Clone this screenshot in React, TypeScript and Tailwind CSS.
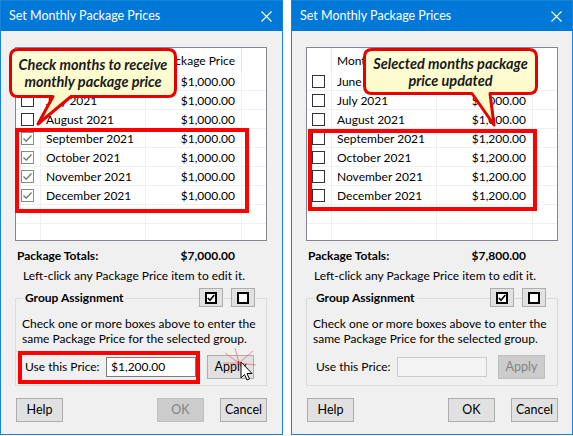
import React from "react";

type Row = { month: string; price: string; checked: boolean };

const leftRows: Row[] = [
  { month: "June 2021", price: "$1,000.00", checked: false },
  { month: "July 2021", price: "$1,000.00", checked: false },
  { month: "August 2021", price: "$1,000.00", checked: false },
  { month: "September 2021", price: "$1,000.00", checked: true },
  { month: "October 2021", price: "$1,000.00", checked: true },
  { month: "November 2021", price: "$1,000.00", checked: true },
  { month: "December 2021", price: "$1,000.00", checked: true },
];

const rightRows: Row[] = [
  { month: "June 2021", price: "$1,000.00", checked: false },
  { month: "July 2021", price: "$1,000.00", checked: false },
  { month: "August 2021", price: "$1,000.00", checked: false },
  { month: "September 2021", price: "$1,200.00", checked: false },
  { month: "October 2021", price: "$1,200.00", checked: false },
  { month: "November 2021", price: "$1,200.00", checked: false },
  { month: "December 2021", price: "$1,200.00", checked: false },
];

function RowCheck({ checked }: { checked: boolean }) {
  if (checked) {
    return (
      <div className="flex h-[13px] w-[13px] items-center justify-center border border-[#8a8a8a] bg-white">
        <svg width="11" height="11" viewBox="0 0 11 11">
          <path d="M1.5 5.5 L4.2 8.2 L9.5 2.5" fill="none" stroke="#6b6b6b" strokeWidth="1.2" />
        </svg>
      </div>
    );
  }
  return <div className="h-[13px] w-[13px] border border-[#333333] bg-white" />;
}

function Btn({ label, disabled, className = "" }: { label: string; disabled?: boolean; className?: string }) {
  return (
    <div
      className={
        "flex h-[24px] w-[47px] items-center justify-center border text-[12.5px] " +
        (disabled
          ? "border-[#bfbfbf] bg-[#cccccc] text-[#838383] "
          : "border-[#adadad] bg-[#e1e1e1] text-black ") +
        className
      }
    >
      {label}
    </div>
  );
}

function GlyphBtn({ checked }: { checked: boolean }) {
  return (
    <div className="flex h-[19px] w-[24px] items-center justify-center border border-[#adadad] bg-[#e1e1e1]">
      <div className="flex h-[12px] w-[12px] items-center justify-center border-2 border-black bg-white">
        {checked && (
          <svg width="8" height="8" viewBox="0 0 8 8">
            <path d="M0.8 4 L3 6.3 L7.3 1" fill="none" stroke="black" strokeWidth="1.6" />
          </svg>
        )}
      </div>
    </div>
  );
}

function Balloon({
  left,
  width,
  height,
  tail,
  lines,
}: {
  left: number;
  width: number;
  height: number;
  tail: { a: number; b: number; tx: number; ty: number };
  lines: string[];
}) {
  const w = width;
  const h = height;
  const r = 9;
  const d = `M${r} 1.5 H${w - r} Q${w - 1.5} 1.5 ${w - 1.5} ${r} V${h - r} Q${w - 1.5} ${h - 1.5} ${w - r} ${h - 1.5} H${tail.b} L${tail.tx} ${tail.ty} L${tail.a} ${h - 1.5} H${r} Q1.5 ${h - 1.5} 1.5 ${h - r} V${r} Q1.5 1.5 ${r} 1.5 Z`;
  return (
    <div className="absolute top-[47px]" style={{ left, width, height }}>
      <svg className="absolute left-0 top-0 overflow-visible" width={w} height={h}>
        <defs>
          <linearGradient id={"g" + left} x1="0" y1="0" x2="0" y2="1">
            <stop offset="0" stopColor="#ffffd8" />
            <stop offset="1" stopColor="#fbf7c0" />
          </linearGradient>
        </defs>
        <path d={d} fill={"url(#g" + left + ")"} stroke="#e60000" strokeWidth="3" strokeLinejoin="round" />
      </svg>
      <div className="relative flex h-full flex-col items-center justify-center font-['Lato',sans-serif] text-[14.5px] font-bold italic leading-[17px] text-[#1a1a1a]">
        {lines.map((l) => (
          <span key={l}>{l}</span>
        ))}
      </div>
    </div>
  );
}

function Dialog({ variant }: { variant: "left" | "right" }) {
  const isLeft = variant === "left";
  const rows = isLeft ? leftRows : rightRows;
  return (
    <div
      className={
        "relative flex h-[435px] flex-col border border-[#1883d7] bg-[#f0f0f0] font-['Lato',sans-serif] text-[12px] text-black " +
        (isLeft ? "w-[283px]" : "w-[282px]")
      }
    >
      <div className="flex h-[30px] shrink-0 items-center justify-between bg-[#0078d7] pl-[8px] pr-[9px] text-[12.5px] text-white">
        <span>Set Monthly Package Prices</span>
        <svg width="11" height="11" viewBox="0 0 11 11" className="mr-[1px]">
          <path d="M0.5 0.5 L10.5 10.5 M10.5 0.5 L0.5 10.5" stroke="white" strokeWidth="1.1" />
        </svg>
      </div>

      <div className="flex flex-1 flex-col px-[14px] pt-[16px]">
        {/* list view */}
        <div className="h-[194px] w-[252px] overflow-hidden border border-[#828790] bg-white">
          <div className="grid h-[24px] grid-cols-[25px_105px_96px_1fr] items-center">
            <div className="h-full border-r border-[#e5e5e5]" />
            <div className="flex h-full items-center border-r border-[#e5e5e5] pl-[5px] pt-[2px]">Month</div>
            <div className="flex h-full items-center justify-end border-r border-[#e5e5e5] pr-[6px] pt-[2px]">Package Price</div>
            <div />
          </div>
          {rows.map((r) => (
            <div key={r.month} className="grid h-[19px] grid-cols-[25px_105px_96px_1fr] border-b border-[#f0f0f0]">
              <div className="flex items-center border-r border-[#f0f0f0] pl-[5px]">
                <RowCheck checked={r.checked} />
              </div>
              <div className="flex items-center border-r border-[#f0f0f0] pl-[5px] pt-[1px]">{r.month}</div>
              <div className="flex items-center justify-end border-r border-[#f0f0f0] pr-[6px] pt-[1px]">{r.price}</div>
              <div />
            </div>
          ))}
          {[0, 1].map((i) => (
            <div key={i} className="grid h-[19px] grid-cols-[25px_105px_96px_1fr] border-b border-[#f0f0f0]">
              <div className="border-r border-[#f0f0f0]" />
              <div className="border-r border-[#f0f0f0]" />
              <div className="border-r border-[#f0f0f0]" />
              <div />
            </div>
          ))}
        </div>

        <div className="mt-[6px] flex h-[18px] w-[252px] items-center justify-between pl-[2px] pr-[32px] font-bold">
          <span>Package Totals:</span>
          <span>{isLeft ? "$7,000.00" : "$7,800.00"}</span>
        </div>
        <div className="mt-[2px] flex h-[18px] items-center whitespace-nowrap pl-[8px]">Left-click any Package Price item to edit it.</div>

        {/* group box */}
        <div className="mt-[13px] w-[252px] border border-[#dcdcdc] pb-[6px]">
          <div className="-mt-[11px] flex h-[19px] items-center justify-between">
            <span className="ml-[7px] bg-[#f0f0f0] px-[2px] font-bold">Group Assignment</span>
            <div className="mr-[11px] flex gap-[8px]">
              <GlyphBtn checked />
              <GlyphBtn checked={false} />
            </div>
          </div>
          <div className="mt-[9px] whitespace-nowrap px-[6px] leading-[15px]">
            <div>Check one or more boxes above to enter the</div>
            <div>same Package Price for the selected group.</div>
          </div>
          <div className="mt-[9px] flex h-[24px] items-center">
            <span className="ml-[9px] w-[81px]">Use this Price:</span>
            {isLeft ? (
              <div className="flex h-[20px] w-[90px] items-center border border-[#7a7a7a] bg-white pl-[4px]">$1,200.00</div>
            ) : (
              <div className="h-[20px] w-[90px] border border-[#cccccc] bg-[#f4f4f4]" />
            )}
            <Btn label="Apply" disabled={!isLeft} className="ml-[11px]" />
          </div>
        </div>

        <div className="mt-[12px] flex w-[252px] items-center pl-[1px]">
          <Btn label="Help" />
          <Btn label="OK" disabled={isLeft} className="ml-auto" />
          <Btn label="Cancel" className="ml-[16px]" />
        </div>
      </div>

      {/* annotations */}
      {isLeft ? (
        <>
          <div className="absolute left-[14px] top-[127px] h-[85px] w-[234px] border-4 border-[#ff0000]" />
          <div className="absolute left-[17px] top-[350px] h-[33px] w-[182px] border-4 border-[#ff0000]" />
          <Balloon
            left={8}
            width={168}
            height={50}
            tail={{ a: 44, b: 62, tx: 29, ty: 76 }}
            lines={["Check months to receive", "monthly package price"]}
          />
          <svg className="absolute left-[222px] top-[346px]" width="34" height="34" viewBox="0 0 34 34">
            <g stroke="#ff3a4a" strokeWidth="1" opacity="0.55">
              <path d="M16 16 L2 6 M16 16 L30 4 M16 16 L33 18 M16 16 L4 26 M16 16 L12 1 M16 16 L24 30 M16 16 L0 16 M16 16 L28 26" />
            </g>
            <path
              d="M18 15 L18 31 L21.5 27.5 L24 33 L26.5 32 L24 26.5 L29 26.5 Z"
              fill="white"
              stroke="black"
              strokeWidth="1"
              strokeLinejoin="round"
            />
          </svg>
        </>
      ) : (
        <>
          <div className="absolute left-[16px] top-[128px] h-[82px] w-[229px] border-4 border-[#ff0000]" />
          <Balloon
            left={71}
            width={175}
            height={47}
            tail={{ a: 109, b: 127, tx: 131, ty: 77 }}
            lines={["Selected months package", "price updated"]}
          />
        </>
      )}
    </div>
  );
}

export default function App() {
  return (
    <div className="flex h-[436px] w-[573px] gap-[8px] overflow-hidden bg-white">
      <Dialog variant="left" />
      <Dialog variant="right" />
    </div>
  );
}
